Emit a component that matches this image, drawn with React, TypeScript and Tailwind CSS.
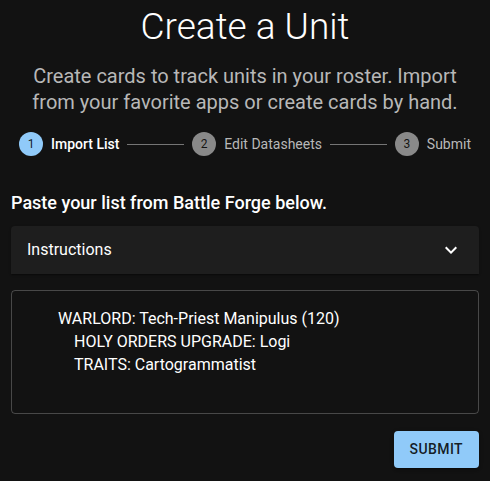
import React from "react";

function StepCircle({ n, active }: { n: number; active?: boolean }) {
  return (
    <div
      className={
        "flex h-6 w-6 shrink-0 items-center justify-center rounded-full text-[12px] leading-none text-[rgba(0,0,0,0.87)] " +
        (active ? "bg-[#90caf9]" : "bg-[#898989]")
      }
    >
      {n}
    </div>
  );
}

function Connector() {
  return (
    <div className="flex flex-1 items-center">
      <div className="h-px w-full bg-[#757575]" />
    </div>
  );
}

export default function App() {
  return (
    <div className="min-h-[481px] w-full bg-[#121212] font-['Roboto',sans-serif] text-white">
      <div className="px-[11px] pt-[5px]">
        <h1 className="text-center text-[37px] font-light leading-[44px] text-white">
          Create a Unit
        </h1>
        <p className="mt-[14px] text-center text-[20px] leading-[26px] text-[#b8b8b8]">
          Create cards to track units in your roster. Import from your favorite apps or create cards by hand.
        </p>

        <div className="mt-[17px] flex h-6 items-center">
          <div className="flex items-center gap-2 px-2">
            <StepCircle n={1} active />
            <span className="text-[14px] font-medium text-white">Import List</span>
          </div>
          <Connector />
          <div className="flex items-center gap-2 px-2">
            <StepCircle n={2} />
            <span className="text-[14px] text-[#b8b8b8]">Edit Datasheets</span>
          </div>
          <Connector />
          <div className="flex items-center gap-2 px-2">
            <StepCircle n={3} />
            <span className="text-[14px] text-[#b8b8b8]">Submit</span>
          </div>
        </div>

        <h2 className="mt-[35px] text-[18px] font-medium leading-6 text-white">
          Paste your list from Battle Forge below.
        </h2>

        <div className="mt-[11px] flex h-12 items-center justify-between rounded-t bg-[#1e1e1e] px-4 shadow-[0_2px_1px_-1px_rgba(0,0,0,0.2),0_1px_1px_0_rgba(0,0,0,0.14),0_1px_3px_0_rgba(0,0,0,0.12)]">
          <span className="text-[16px] text-white">Instructions</span>
          <svg width="24" height="24" viewBox="0 0 24 24" className="fill-white">
            <path d="M16.59 8.59 12 13.17 7.41 8.59 6 10l6 6 6-6z" />
          </svg>
        </div>

        <div className="mt-4 box-border h-[124px] rounded border border-[rgba(255,255,255,0.23)] px-[14px] pt-4 text-[16px] leading-[23px] text-white">
          <div className="ml-[32px]">WARLORD: Tech-Priest Manipulus (120)</div>
          <div className="ml-[48px]">HOLY ORDERS UPGRADE: Logi</div>
          <div className="ml-[48px]">TRAITS: Cartogrammatist</div>
        </div>

        <div className="mt-[17px] flex justify-end">
          <button className="h-[36.5px] rounded bg-[#90caf9] px-4 text-[14px] font-medium uppercase tracking-[0.4px] text-[rgba(0,0,0,0.87)] shadow-[0_3px_1px_-2px_rgba(0,0,0,0.2),0_2px_2px_0_rgba(0,0,0,0.14),0_1px_5px_0_rgba(0,0,0,0.12)]">
            Submit
          </button>
        </div>
      </div>
    </div>
  );
}
